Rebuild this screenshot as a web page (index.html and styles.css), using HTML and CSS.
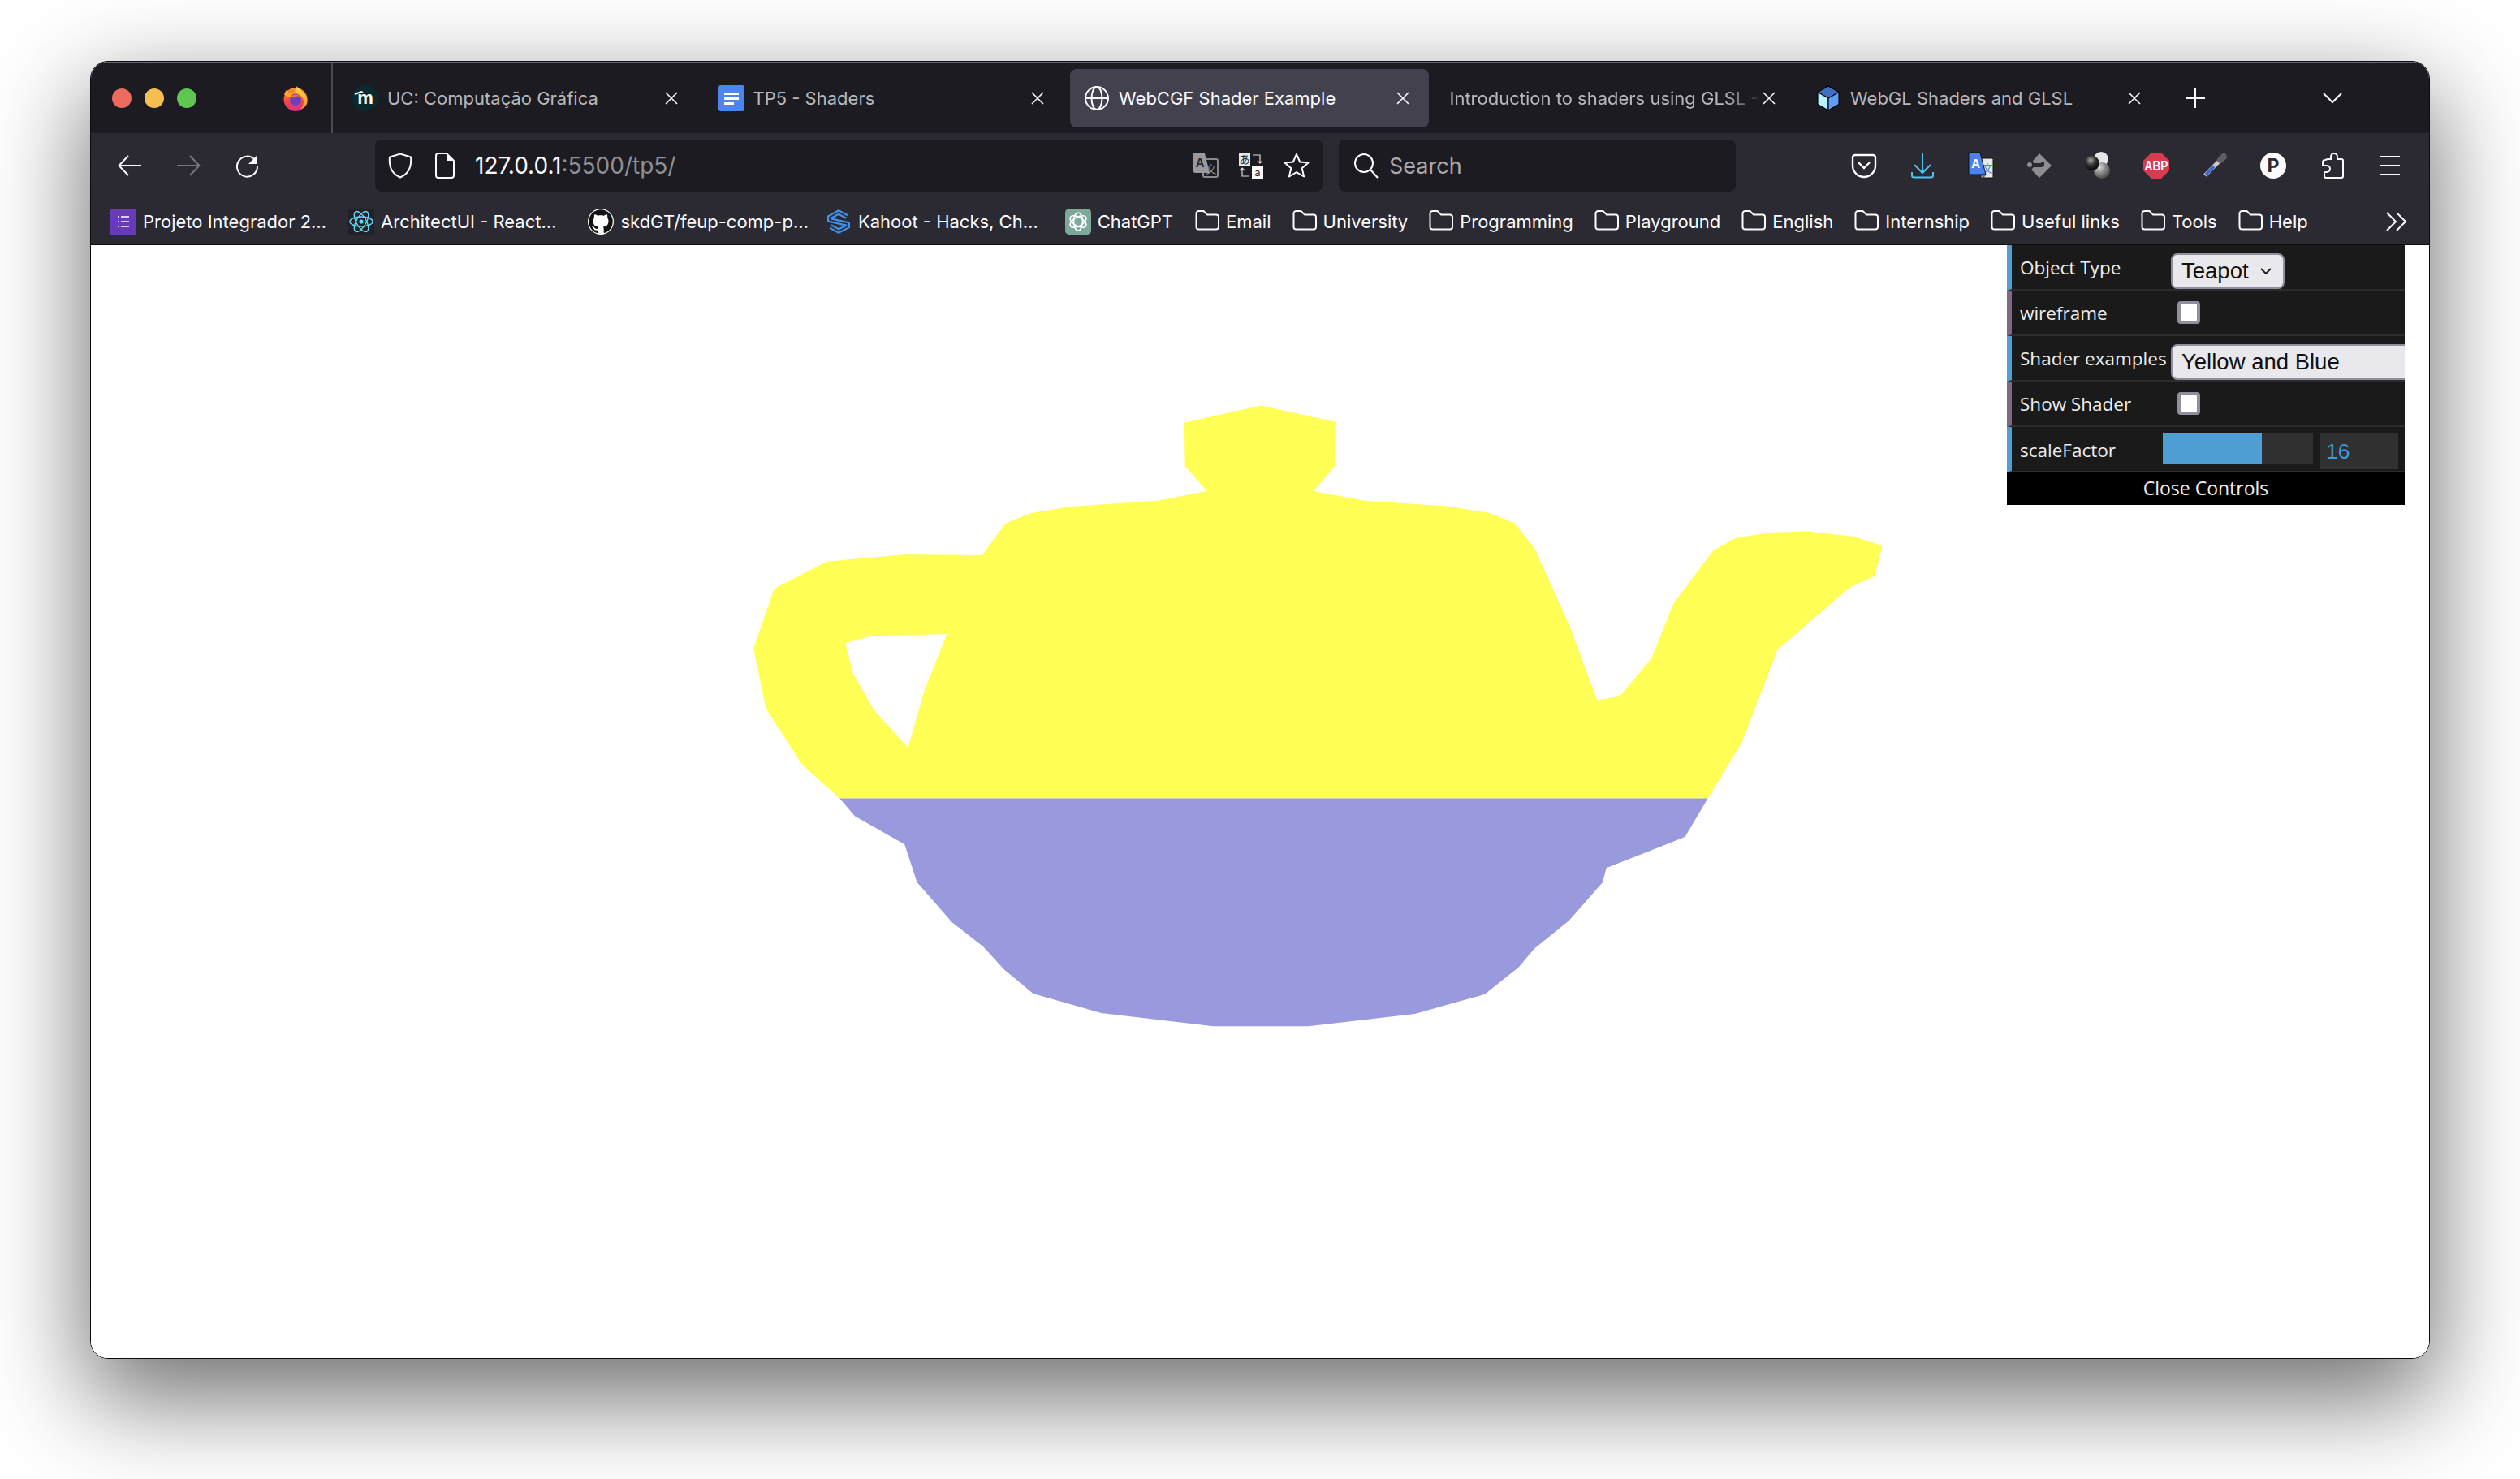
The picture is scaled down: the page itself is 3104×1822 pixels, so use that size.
FILE: index.html
```html
<!DOCTYPE html>
<html lang="en">
<head>
  <meta charset="UTF-8" />
  <title>WebCGF Shader Example</title>
  <link rel="stylesheet" href="styles.css">
</head>
<body>
  <svg class="sprite" aria-hidden="true">
    <symbol id="close" viewBox="0 0 16 16"><path d="M1 1l14 14M15 1L1 15" fill="none" stroke="currentColor" stroke-width="1.6"/></symbol>
    <symbol id="folder" viewBox="0 0 30 26"><path d="M1.5 5a3 3 0 0 1 3-3h6l4.500 4.500h11a3 3 0 0 1 3 3V21.500a3 3 0 0 1-3 3h-21.500a3 3 0 0 1-3-3z" fill="none" stroke="#fbfbfe" stroke-width="2"/></symbol>
    <radialGradient id="ball" cx="35%" cy="30%" r="75%"><stop offset="0" stop-color="#ddd"/><stop offset=".5" stop-color="#8a8a8a"/><stop offset="1" stop-color="#444"/></radialGradient>
    <radialGradient id="ballDark" cx="40%" cy="30%" r="75%"><stop offset="0" stop-color="#aaa"/><stop offset=".45" stop-color="#333"/><stop offset="1" stop-color="#000"/></radialGradient>
    <linearGradient id="foxBody" x1="0" y1="0" x2="0" y2="1"><stop offset="0" stop-color="#ff9a2e"/><stop offset=".6" stop-color="#f2473f"/><stop offset="1" stop-color="#d6308f"/></linearGradient>
    <linearGradient id="foxFlame" x1="0" y1="0" x2="0" y2="1"><stop offset="0" stop-color="#ffe14a"/><stop offset="1" stop-color="#ff8a1f"/></linearGradient>
  </svg>

  <div class="window">
    <!-- tabs -->
    <div class="tabbar">
      <div class="lights">
        <span class="light red"></span>
        <span class="light yellow"></span>
        <span class="light green"></span>
      </div>
      <svg class="fox" viewBox="0 0 32 32">
        <circle cx="16" cy="17.500" r="14.500" fill="url(#foxBody)"/>
        <path d="M18 1c1 4 5 5 9 9 4 5 4 10 3 13-2 4-5 6-8 6 4-3 5-9 3-13-2-5-9-6-10-9 1-2 2-4 3-6z" fill="url(#foxFlame)"/>
        <path d="M2 11c1-3 2-4 4-6 0 2 1 3 2 4 2 0 6-1 8 0-3 1-6 2-6 5-3 1-5 0-8-3z" fill="#ffa436"/>
        <circle cx="16" cy="18" r="7" fill="#6d3fc4"/>
        <path d="M10 14c3-3 9-3 12 0-3-1-8-1-9 2z" fill="#f2732e"/>
      </svg>
      <span class="tab-sep"></span>
      <div class="tabs">
        <div class="tab">
          <svg class="tab-icon" viewBox="0 0 32 32"><circle cx="16" cy="16" r="16" fill="#0b2a2e"/><text x="16" y="23" text-anchor="middle" class="moodle-m">m</text><path d="M3 11l8-3 2 1" fill="none" stroke="#fff" stroke-width="2"/></svg>
          <span class="tab-title">UC: Computação Gráfica</span>
          <svg class="tab-close"><use href="#close"/></svg>
        </div>
        <div class="tab">
          <svg class="tab-icon" viewBox="0 0 32 32"><rect width="32" height="32" rx="3" fill="#4b86f0"/><path d="M7 9h18v3H7zM7 15h18v3H7zM7 21h12v3H7z" fill="#fff"/></svg>
          <span class="tab-title">TP5 - Shaders</span>
          <svg class="tab-close"><use href="#close"/></svg>
        </div>
        <div class="tab active">
          <svg class="tab-icon" viewBox="0 0 32 32" fill="none" stroke="#fbfbfe" stroke-width="2"><circle cx="16" cy="16" r="14"/><ellipse cx="16" cy="16" rx="6.500" ry="14"/><path d="M2 16h28"/></svg>
          <span class="tab-title">WebCGF Shader Example</span>
          <svg class="tab-close"><use href="#close"/></svg>
        </div>
        <div class="tab">
          <span class="tab-title fade">Introduction to shaders using GLSL -</span>
          <svg class="tab-close"><use href="#close"/></svg>
        </div>
        <div class="tab">
          <svg class="tab-icon" viewBox="0 0 32 32" stroke="#050505" stroke-width="1.200"><path d="M16 1l13 7.500-13 7.500L3 8.500z" fill="#3f6fc4"/><path d="M3 8.500L16 16v15L3 23.500z" fill="#b5f4ff"/><path d="M29 8.500L16 16v15l13-7.500z" fill="#5f9df6"/></svg>
          <span class="tab-title">WebGL Shaders and GLSL</span>
          <svg class="tab-close"><use href="#close"/></svg>
        </div>
      </div>
      <svg class="newtab" viewBox="0 0 24 24"><path d="M12 0v24M0 12h24" stroke="#fbfbfe" stroke-width="2"/></svg>
      <svg class="tablist" viewBox="0 0 24 14"><path d="M1 1l11 11L23 1" fill="none" stroke="#fbfbfe" stroke-width="2"/></svg>
    </div>

    <!-- toolbar -->
    <div class="toolbar">
      <div class="nav-buttons">
        <span class="btn"><svg class="ico" viewBox="0 0 32 32" fill="none" stroke="#fbfbfe" stroke-width="2"><path d="M30 16H3M14 4L2.500 16 14 28"/></svg></span>
        <span class="btn"><svg class="ico" viewBox="0 0 32 32" fill="none" stroke="#77767e" stroke-width="2"><path d="M2 16h27M18 4l11.500 12L18 28"/></svg></span>
        <span class="btn"><svg class="ico" viewBox="0 0 32 32"><path d="M26 9a12.500 12.500 0 1 0 3 8" fill="none" stroke="#fbfbfe" stroke-width="2"/><path d="M29 3v11H18z" fill="#fbfbfe"/></svg></span>
      </div>
      <div class="urlbar">
        <svg class="shield" viewBox="0 0 30 32"><path d="M15 1.500l13 4c1 10-1 20-13 25C3 25.500 1 15.500 2 5.500z" fill="none" stroke="#fbfbfe" stroke-width="2"/></svg>
        <svg class="page" viewBox="0 0 24 32"><path d="M4 1h10l9 9v18a3 3 0 0 1-3 3H4a3 3 0 0 1-3-3V4a3 3 0 0 1 3-3z" fill="none" stroke="#fbfbfe" stroke-width="2"/><path d="M14 1v9h9z" fill="#fbfbfe"/></svg>
        <span class="url"><b>127.0.0.1</b>:5500/tp5/</span>
        <span class="url-actions">
          <svg class="ico" viewBox="0 0 32 32"><rect x="13" y="8" width="18" height="22" rx="2" fill="none" stroke="#8b8a90" stroke-width="2"/><text x="23" y="25" text-anchor="middle" class="gly gly-gray">文</text><path d="M1 1h14l6 24H3a2 2 0 0 1-2-2z" fill="#9a999e"/><text x="9" y="18" text-anchor="middle" class="gly-bold gly-ink">A</text></svg>
          <svg class="ico" viewBox="0 0 32 32"><rect x="1" y="1" width="14" height="15" fill="#e8e8e8"/><text x="8" y="13" text-anchor="middle" class="gly gly-dark">あ</text><rect x="17" y="16" width="14" height="16" fill="#fbfbfe"/><text x="24" y="29" text-anchor="middle" class="gly gly-dark">a</text><path d="M18 3h9v10M24 10l3 3 3-3M14 29H5V19M2 22l3-3 3 3" fill="none" stroke="#ddd" stroke-width="1.200"/></svg>
          <svg class="ico" viewBox="0 0 32 32"><path d="M16 2l4.200 9.500 10.300 1-7.800 6.800 2.400 10.200L16 24.200 6.900 29.500l2.400-10.200L1.500 12.500l10.300-1z" fill="none" stroke="#fbfbfe" stroke-width="2" stroke-linejoin="round"/></svg>
        </span>
      </div>
      <div class="searchbar">
        <svg class="ico" viewBox="0 0 32 32" fill="none" stroke="#fbfbfe" stroke-width="2"><circle cx="13" cy="13" r="11"/><path d="M21 21l9 10"/></svg>
        <span class="search-text">Search</span>
      </div>
      <div class="ext-buttons">
        <span class="btn"><svg class="ico" viewBox="0 0 32 32" fill="none" stroke="#fbfbfe" stroke-width="2.400"><path d="M5 3h22a3 3 0 0 1 3 3v10a14 14 0 0 1-28 0V6a3 3 0 0 1 3-3z"/><path d="M9 12l7 7 7-7"/></svg></span>
        <span class="btn"><svg class="ico" viewBox="0 0 32 32" fill="none" stroke="#4dc4ec" stroke-width="2"><path d="M16 0v25M6 15l10 10 10-10M3 24v4a2.500 2.500 0 0 0 2.500 2.500h21A2.500 2.500 0 0 0 29 28v-4"/></svg></span>
        <span class="btn"><svg class="ico" viewBox="0 0 32 32"><rect x="16" y="7" width="15" height="24" rx="1.500" fill="#e8e8e8" stroke="#111"/><text x="24" y="24" text-anchor="middle" class="gly gly-blue">文</text><path d="M3 0h12l7 27H3a2 2 0 0 1-2-2V2a2 2 0 0 1 2-2z" fill="#4c82ec" stroke="#111"/><path d="M16 27h6l-3 4z" fill="#4c82ec" stroke="#111" stroke-width=".6"/><text x="9.500" y="19" text-anchor="middle" class="gly-bold">A</text></svg></span>
        <span class="btn"><svg class="ico" viewBox="0 0 32 32"><path d="M16 1L31 16 16 31 6 21l3-3h8l5-2v-1h-4v-2h-9l-1-3z" fill="#8d8d8f"/><circle cx="4" cy="15" r="3" fill="#8d8d8f"/><path d="M9 14h9v-2h4v4l-3 2h-6l-1-2H9z" fill="#2b2a33"/></svg></span>
        <span class="btn"><svg class="ico" viewBox="0 0 32 32"><circle cx="20" cy="8" r="9" fill="#e6e6e6"/><circle cx="21" cy="22" r="10" fill="url(#ball)"/><circle cx="9" cy="13" r="9" fill="url(#ballDark)"/></svg></span>
        <span class="btn"><svg class="ico" viewBox="0 0 32 32"><path d="M10 0h12l10 10v12L22 32H10L0 22V10z" fill="#da3a50"/><text x="16" y="22" text-anchor="middle" textLength="29" lengthAdjust="spacingAndGlyphs" class="abp">ABP</text></svg></span>
        <span class="btn"><svg class="ico" viewBox="0 0 32 32"><path d="M25 7L4 28" stroke="#c8c8cc" stroke-width="5"/><path d="M15 17L5 27" stroke="#4269c8" stroke-width="4"/><path d="M27 5l-4 4" stroke="#5e5e62" stroke-width="8" stroke-linecap="round"/></svg></span>
        <span class="btn"><svg class="ico" viewBox="0 0 32 32"><circle cx="16" cy="16" r="16" fill="#fbfbfe"/><text x="16" y="24" text-anchor="middle" class="parking">P</text></svg></span>
        <span class="btn"><svg class="ico" viewBox="0 0 32 32"><path d="M11 8h4V5a4 4 0 0 1 8 0v3h5a2 2 0 0 1 2 2v19a2 2 0 0 1-2 2H9a2 2 0 0 1-2-2v-5h3a4 4 0 0 0 0-8H5v-4a3 3 0 0 1 3-3z" fill="none" stroke="#fbfbfe" stroke-width="2"/></svg></span>
        <span class="btn"><svg class="ico" viewBox="0 0 32 32"><path d="M4 5h24M4 16h24M4 27h24" stroke="#fbfbfe" stroke-width="2"/></svg></span>
      </div>
    </div>

    <!-- bookmarks -->
    <div class="bookmarks">
      <a class="bm">
        <svg class="bm-icon" viewBox="0 0 32 32"><rect width="32" height="32" fill="#673ab7"/><path d="M13 10h10M13 16h10M13 22h10M9 10h2M9 16h2M9 22h2" stroke="#fff" stroke-width="1.600"/></svg>
        Projeto Integrador 2…</a>
      <a class="bm">
        <svg class="bm-icon" viewBox="0 0 32 32"><rect width="32" height="32" rx="3" fill="#222226"/><g fill="none" stroke="#61dafb" stroke-width="1.400"><ellipse cx="16" cy="16" rx="14" ry="6"/><ellipse cx="16" cy="16" rx="14" ry="6" transform="rotate(60 16 16)"/><ellipse cx="16" cy="16" rx="14" ry="6" transform="rotate(120 16 16)"/></g><circle cx="16" cy="16" r="2.600" fill="#61dafb"/></svg>
        ArchitectUI - React…</a>
      <a class="bm bm-github">
        <svg class="bm-icon" viewBox="0 0 16 16"><circle cx="8" cy="8" r="8" fill="#fbfbfe"/><path fill="#111" transform="translate(.6 .6) scale(.925)" d="M8 0C3.580 0 0 3.580 0 8c0 3.540 2.290 6.530 5.470 7.590.4.070.55-.17.55-.38 0-.19-.01-.82-.01-1.490-2.010.37-2.530-.49-2.690-.94-.09-.23-.48-.94-.82-1.130-.28-.15-.68-.52-.01-.53.63-.01 1.080.58 1.230.82.72 1.210 1.870.87 2.330.66.07-.52.28-.87.51-1.070-1.780-.2-3.640-.89-3.640-3.950 0-.87.31-1.590.82-2.150-.08-.2-.36-1.020.08-2.120 0 0 .67-.21 2.200.82.64-.18 1.320-.27 2-.27.68 0 1.360.09 2 .27 1.530-1.040 2.200-.82 2.200-.82.44 1.100.16 1.920.08 2.120.51.56.82 1.270.82 2.150 0 3.070-1.870 3.750-3.650 3.950.29.25.54.73.54 1.480 0 1.070-.01 1.930-.01 2.200 0 .21.15.46.55.38A8.013 8.013 0 0016 8c0-4.420-3.580-8-8-8z"/></svg>
        skdGT/feup-comp-p…</a>
      <a class="bm bm-kahoot">
        <svg class="bm-icon" viewBox="0 0 32 32" fill="none" stroke-linejoin="miter"><path d="M26 10L16 4.500 5 10.500V14L27 19V22L16 27.500 6 22" stroke="#3f92ea" stroke-width="6"/><path d="M26 10L16 4.500 5 10.500V14L27 19V22L16 27.500 6 22" stroke="#2b2a33" stroke-width="1.600"/></svg>
        Kahoot - Hacks, Ch…</a>
      <a class="bm bm-chat">
        <svg class="bm-icon" viewBox="0 0 32 32"><rect width="32" height="32" rx="5" fill="#7ea899"/><g fill="none" stroke="#fff" stroke-width="1.600"><ellipse cx="16" cy="16" rx="5.500" ry="11"/><ellipse cx="16" cy="16" rx="5.500" ry="11" transform="rotate(60 16 16)"/><ellipse cx="16" cy="16" rx="5.500" ry="11" transform="rotate(120 16 16)"/></g></svg>
        ChatGPT</a>
      <a class="bm folder"><svg class="bm-folder"><use href="#folder"/></svg>Email</a>
      <a class="bm folder"><svg class="bm-folder"><use href="#folder"/></svg>University</a>
      <a class="bm folder"><svg class="bm-folder"><use href="#folder"/></svg>Programming</a>
      <a class="bm folder"><svg class="bm-folder"><use href="#folder"/></svg>Playground</a>
      <a class="bm folder"><svg class="bm-folder"><use href="#folder"/></svg>English</a>
      <a class="bm folder"><svg class="bm-folder"><use href="#folder"/></svg>Internship</a>
      <a class="bm folder"><svg class="bm-folder"><use href="#folder"/></svg>Useful links</a>
      <a class="bm folder"><svg class="bm-folder"><use href="#folder"/></svg>Tools</a>
      <a class="bm folder"><svg class="bm-folder"><use href="#folder"/></svg>Help</a>
      <svg class="bm-more" viewBox="0 0 26 24" fill="none" stroke="#fbfbfe" stroke-width="2"><path d="M1 1l11 11L1 23M13 1l11 11-11 11"/></svg>
    </div>

    <!-- page -->
    <div class="content">
      <svg class="scene" viewBox="112 302 2880 1371">
        <path class="pot-top" fill-rule="evenodd" d="M1034.200 983.600L987.800 941.700 943.400 872.900 928.100 798.900 953.600 724.900 1018.400 691.700 1114.300 683.100 1209.700 684.100 1238.300 644.800 1269.900 632 1318.400 623.900 1425.500 616.700 1486.700 605 1459.700 574.400 1458.700 520.800 1553.100 499.400 1644.900 519.800 1643.900 574.400 1617.900 605 1680.600 616.700 1786.200 623.900 1834.700 632 1865.300 644.300 1890.800 676.400 1934.200 773.400 1967.300 862.700 1995.400 857.600 2033.700 811.600 2061.700 742.800 2110.200 678 2138.300 662.700 2179.100 656 2225 654.500 2283.700 661.100 2318.400 672.300 2309.200 709.600 2278.600 723.400 2189.300 800.400 2145.900 913.700 2103.600 983.600Z M1041.300 792.200L1073.500 783.600 1166.300 781 1138.800 849.900 1118.400 921.300 1076 873.900 1050.500 829.500Z"/>
        <path class="pot-bottom" d="M1034.200 983.600H2103.600L2075.500 1031 1978.600 1069.300 1974 1087.100 1932.700 1134.100 1889.800 1168.800 1870.400 1191.700 1828.600 1224.900 1742.900 1248.900 1611.700 1264.200 1494.400 1264.200 1356.600 1247.900 1272.400 1223.900 1236.700 1194.300 1211.200 1166.200 1173 1136.600 1129.600 1087.100 1114.300 1040.200 1053.100 1005.500Z"/>
      </svg>

      <div class="gui">
        <div class="gui-row blue">
          <span class="gui-label">Object Type</span>
          <div class="gui-select short"><span>Teapot</span><svg class="caret" viewBox="0 0 14 8"><path d="M1 1l6 6 6-6" fill="none" stroke="#111" stroke-width="1.800"/></svg></div>
        </div>
        <div class="gui-row purple">
          <span class="gui-label">wireframe</span>
          <span class="gui-check"></span>
        </div>
        <div class="gui-row blue">
          <span class="gui-label">Shader examples</span>
          <div class="gui-select wide"><span>Yellow and Blue</span></div>
        </div>
        <div class="gui-row purple">
          <span class="gui-label">Show Shader</span>
          <span class="gui-check"></span>
        </div>
        <div class="gui-row blue slider-row">
          <span class="gui-label">scaleFactor</span>
          <div class="gui-slider"><div class="gui-fill" style="width: 66%"></div></div>
          <div class="gui-number">16</div>
        </div>
        <div class="gui-close">Close Controls</div>
      </div>
    </div>
  </div>
</body>
</html>
```

FILE: styles.css
```css
html, body {
  margin: 0;
  background: #fff;
}
body {
  width: 3104px;
  height: 1822px;
  padding: 75px 111px 0;
  box-sizing: border-box;
  overflow: hidden;
  font-family: Inter, "Noto Sans", sans-serif;
}
.sprite {
  position: absolute;
  width: 0;
  height: 0;
}
.window {
  width: 2882px;
  height: 1599px;
  box-sizing: border-box;
  border: 1px solid #0c0c0e;
  border-radius: 22px;
  overflow: hidden;
  display: flex;
  flex-direction: column;
  box-shadow: 0 44px 120px 6px rgba(0,0,0,0.56);
}

/* tabs */
.tabbar {
  height: 88px;
  box-sizing: border-box;
  border-top: 2px solid #66666a;
  background: #1c1b22;
  display: flex;
  align-items: center;
  color: #b8b7bb;
  flex: none;
}
.lights {
  display: flex;
  gap: 16px;
  margin-left: 26px;
}
.light {
  width: 24px;
  height: 24px;
  border-radius: 50%;
}
.red { background: #ec6a5e; }
.yellow { background: #f4bf4f; }
.green { background: #61c554; }
.fox {
  width: 32px;
  height: 32px;
  margin-left: 106px;
}
.tab-sep {
  width: 2px;
  align-self: stretch;
  margin-left: 28px;
  background: #4a4a50;
}
.tabs {
  display: flex;
  gap: 8.5px;
  margin-left: 7px;
}
.tab {
  width: 442px;
  height: 72px;
  box-sizing: border-box;
  padding: 0 24px 0 17px;
  border-radius: 8px;
  display: flex;
  align-items: center;
  font-size: 22px;
}
.tab.active {
  background: #42414d;
  color: #fbfbfe;
}
.tab-icon {
  width: 32px;
  height: 32px;
  margin-right: 11px;
  flex: none;
}
.tab-title {
  flex: 1;
  white-space: nowrap;
  overflow: hidden;
}
.tab-title.fade {
  -webkit-mask-image: linear-gradient(to right, #000 88%, transparent 100%);
  mask-image: linear-gradient(to right, #000 88%, transparent 100%);
}
.tab-close {
  width: 16px;
  height: 16px;
  color: #fbfbfe;
  flex: none;
}
.moodle-m {
  font: bold 22px "Liberation Sans", sans-serif;
  fill: #fff;
}
.newtab {
  width: 24px;
  height: 24px;
  margin-left: 31px;
}
.tablist {
  width: 24px;
  height: 14px;
  margin-left: 145px;
}

/* toolbar */
.toolbar {
  height: 76px;
  background: #2b2a33;
  display: flex;
  align-items: flex-start;
  padding-top: 8px;
  box-sizing: border-box;
  flex: none;
}
.nav-buttons {
  display: flex;
  margin-left: 12px;
}
.btn {
  width: 72px;
  height: 64px;
  display: flex;
  align-items: center;
  justify-content: center;
}
.ico {
  width: 32px;
  height: 32px;
  flex: none;
  overflow: visible;
}
.urlbar, .searchbar {
  height: 64px;
  background: #1c1b22;
  border-radius: 8px;
  display: flex;
  align-items: center;
  box-sizing: border-box;
}
.urlbar {
  width: 1167px;
  margin-left: 122px;
  padding-left: 16px;
}
.shield {
  width: 30px;
  height: 32px;
}
.page {
  width: 24px;
  height: 32px;
  margin-left: 28px;
}
.url {
  margin-left: 25px;
  font-size: 28px;
  color: #8f8f94;
}
.url b {
  font-weight: 400;
  color: #fbfbfe;
}
.url-actions {
  margin-left: auto;
  margin-right: 16px;
  display: flex;
  gap: 24px;
}
.gly { font-size: 13px; font-family: "Noto Sans CJK JP", sans-serif; }
.gly-gray { fill: #8b8a90; }
.gly-dark { fill: #222; }
.gly-blue { fill: #4c82ec; }
.gly-bold {
  font: bold 17px "Liberation Mono", monospace;
  fill: #fff;
}
.gly-ink { fill: #2b2a33; }
.searchbar {
  width: 489px;
  margin-left: 20px;
  padding-left: 18px;
}
.search-text {
  margin-left: 12px;
  font-size: 27px;
  color: #a9a8ad;
}
.ext-buttons {
  display: flex;
  margin-left: 122px;
}
.abp {
  font: bold 17px "Liberation Sans", sans-serif;
  fill: #fff;
}
.parking {
  font: bold 23px Inter, sans-serif;
  fill: #2b2a33;
}

/* bookmarks */
.bookmarks {
  height: 62px;
  box-sizing: border-box;
  background: #2b2a33;
  border-bottom: 2px solid #0c0c0d;
  padding: 6px 0 0 24px;
  display: flex;
  align-items: center;
  gap: 27px;
  color: #fbfbfe;
  font-size: 22px;
  white-space: nowrap;
  flex: none;
}
.bm {
  display: flex;
  align-items: center;
  gap: 8px;
}
.bm-github { margin-left: 12px; }
.bm-kahoot { margin-left: -6px; }
.bm-chat { margin-left: 6px; }
.folder + .folder { margin-left: -1px; }
.bm-icon {
  width: 32px;
  height: 32px;
}
.bm-folder {
  width: 30px;
  height: 26px;
  margin-bottom: 4px;
}
.bm-more {
  width: 26px;
  height: 24px;
  margin-left: auto;
  margin-right: 27px;
}

/* page */
.content {
  flex: 1;
  position: relative;
  background: #fff;
}
.scene {
  display: block;
  width: 100%;
  height: 100%;
}
.pot-top { fill: #ffff55; }
.pot-bottom { fill: #9999dd; }

/* dat.gui panel */
.gui {
  position: absolute;
  top: 0;
  right: 30px;
  width: 490px;
  overflow: hidden;
  background: #1a1a1a;
  font-family: "Open Sans", sans-serif;
  font-size: 22.500px;
  color: #eee;
}
.gui-row {
  height: 56px;
  box-sizing: border-box;
  border-left: 6px solid #4f9fd5;
  border-bottom: 2px solid #2c2c2c;
  padding-left: 10px;
  display: flex;
  align-items: center;
}
.gui-row.purple { border-left-color: #806787; }
.gui-label {
  width: 176px;
  flex: none;
  white-space: nowrap;
}
.gui-select {
  height: 44px;
  box-sizing: border-box;
  margin: 10px 0 0 10px;
  padding-left: 11px;
  background: #e9e9ed;
  border: 2px solid #8f8f9d;
  border-radius: 8px;
  color: #111;
  font-family: "Liberation Sans", sans-serif;
  font-size: 27.500px;
  display: flex;
  align-items: center;
  flex: none;
}
.gui-select.short { width: 140px; }
.gui-select.wide { width: 330px; }
.caret {
  width: 14px;
  height: 8px;
  margin-left: 14px;
}
.gui-check {
  width: 28px;
  height: 28px;
  box-sizing: border-box;
  margin-left: 18px;
  background: #fff;
  border: 4px solid #8f8f9d;
  border-radius: 4px;
}
.slider-row { align-items: flex-start; }
.slider-row .gui-label { margin-top: 13px; }
.gui-slider {
  width: 185px;
  height: 38px;
  margin-top: 8px;
  background: #303030;
  flex: none;
}
.gui-fill {
  height: 100%;
  background: #4f9fd5;
}
.gui-number {
  width: 96px;
  height: 44px;
  box-sizing: border-box;
  margin: 8px 0 0 9px;
  padding-left: 7px;
  background: #303030;
  color: #3f9ad6;
  font-family: "Liberation Sans", sans-serif;
  font-size: 26.500px;
  line-height: 45px;
  flex: none;
}
.gui-close {
  height: 40px;
  background: #000;
  text-align: center;
  line-height: 38px;
  font-size: 23px;
}
```
